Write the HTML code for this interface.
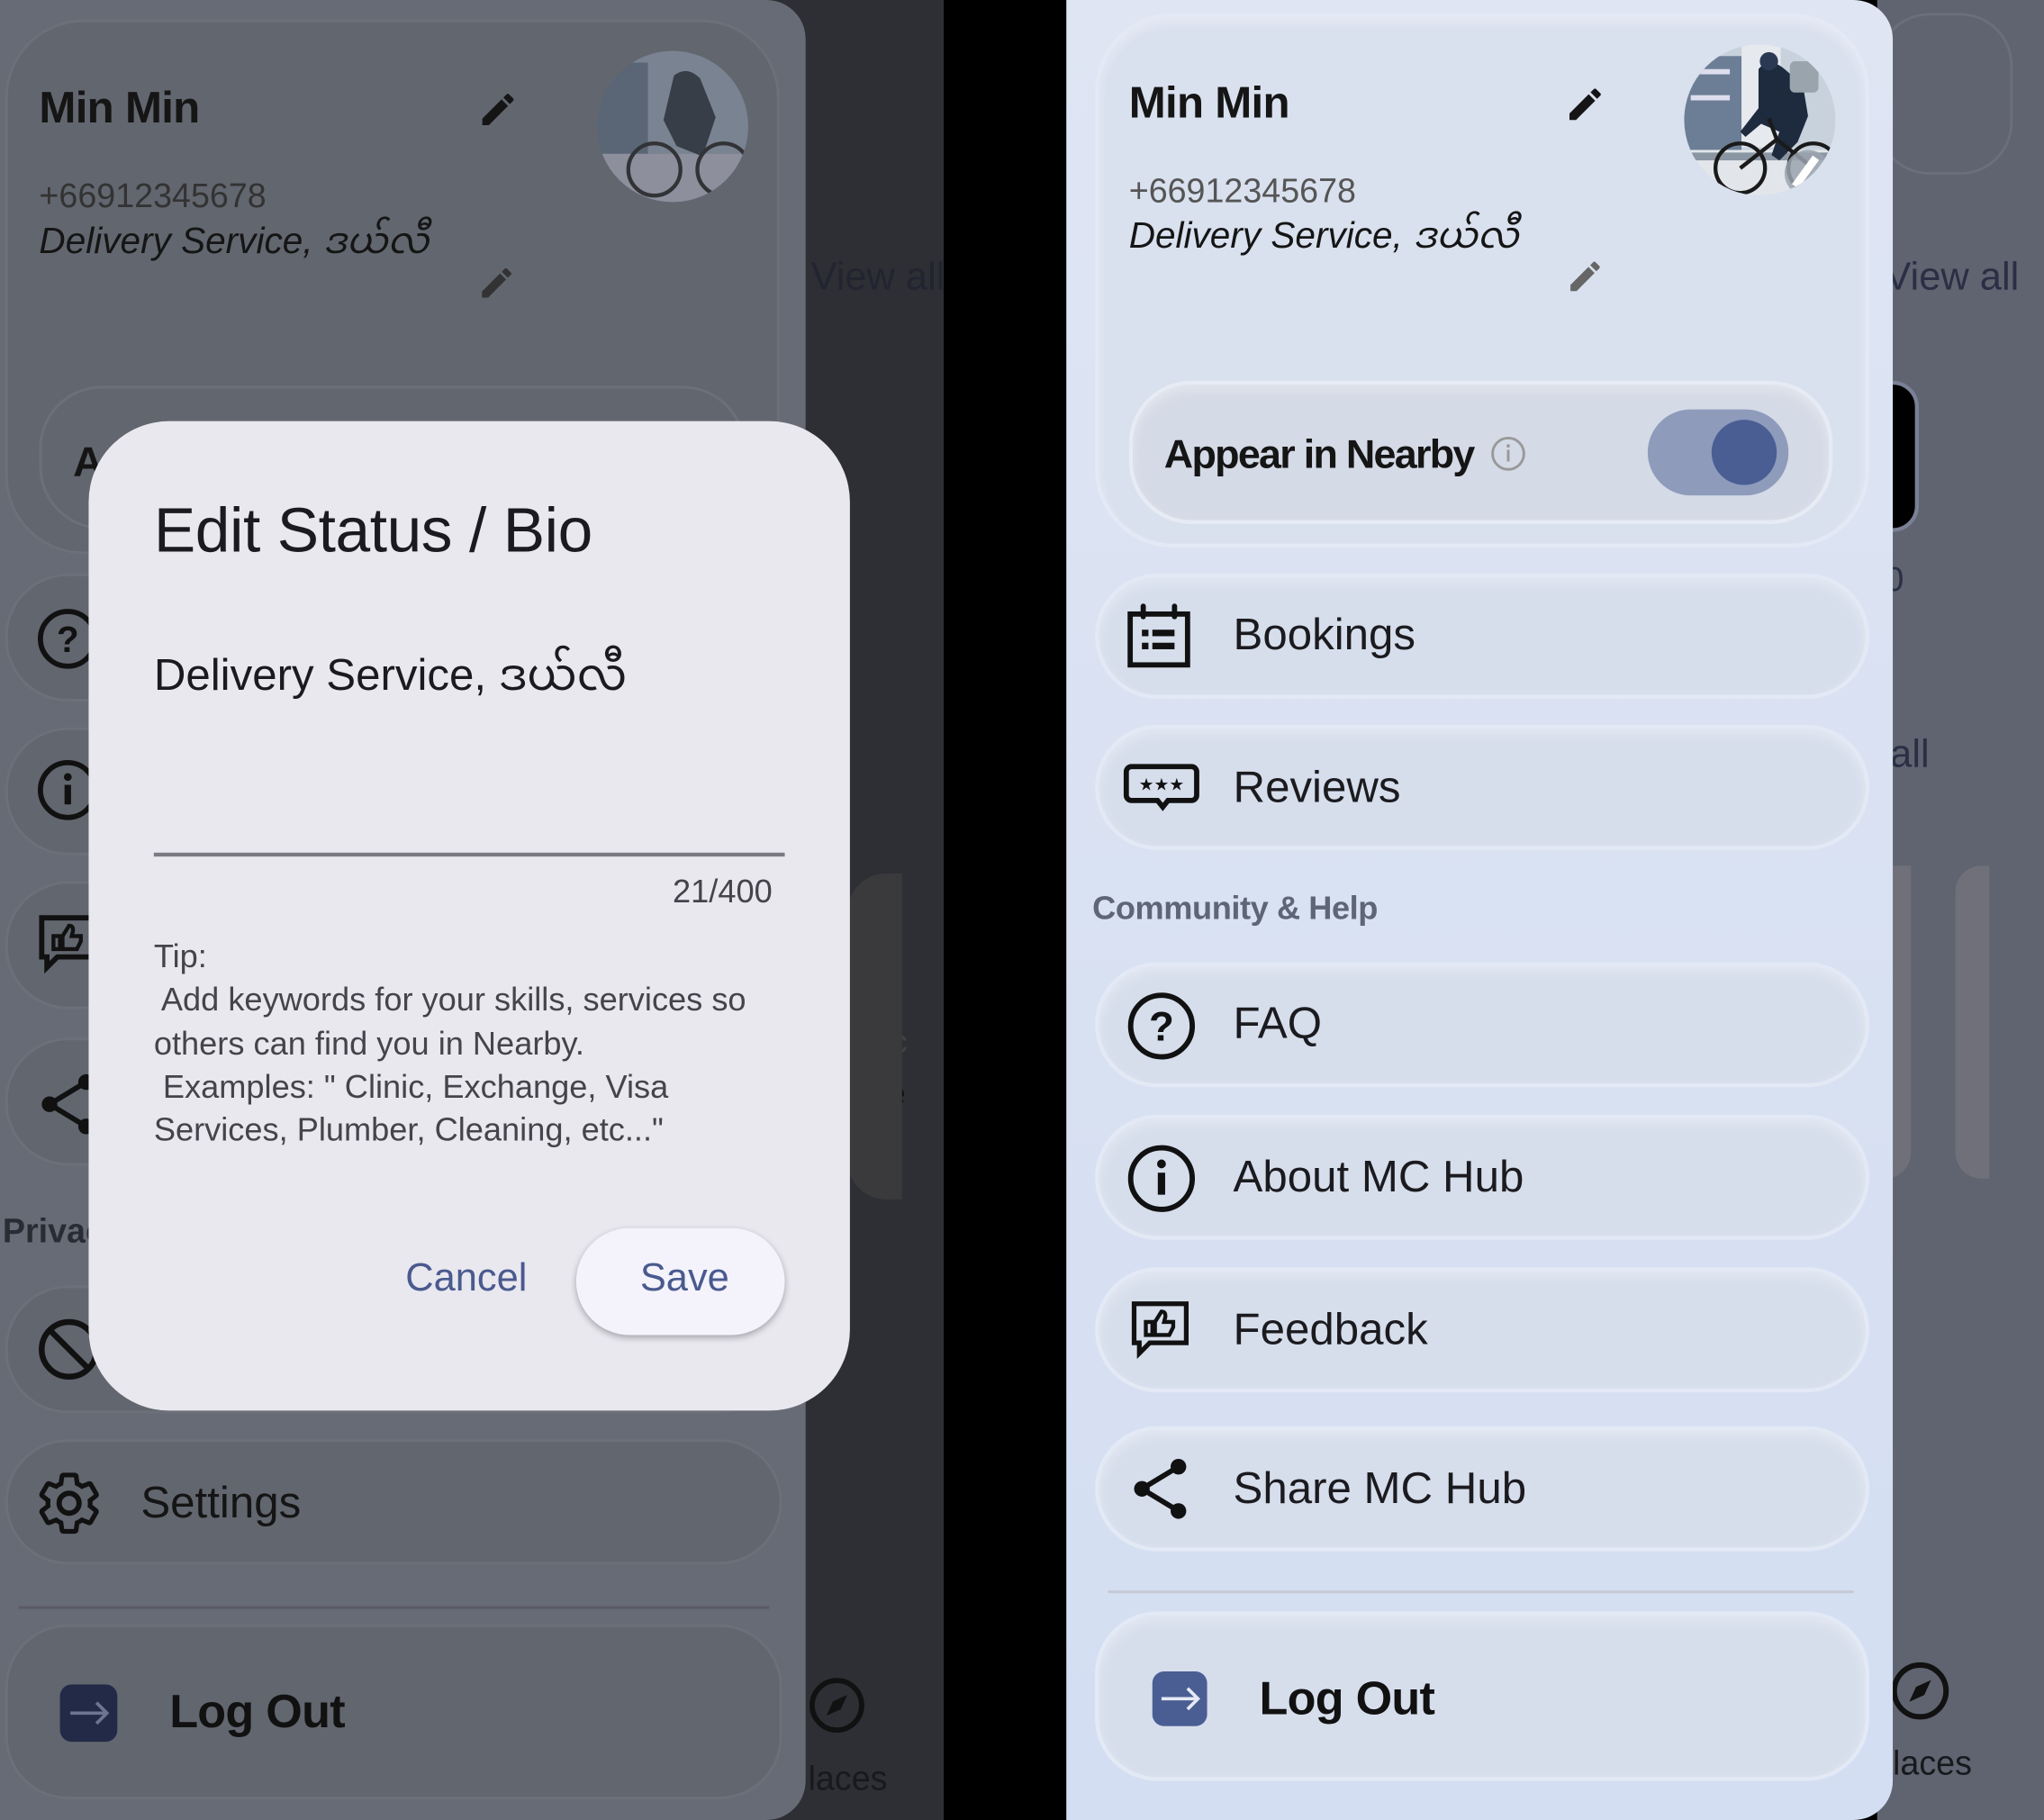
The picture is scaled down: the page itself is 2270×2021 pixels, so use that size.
<!DOCTYPE html>
<html><head><meta charset="utf-8">
<style>
html,body{margin:0;padding:0;width:2270px;height:2021px;overflow:hidden;background:#000;}
#s{position:absolute;left:0;top:0;width:1568px;height:1396px;transform:scale(1.44770,1.44771);transform-origin:0 0;font-family:"Liberation Sans","Noto Sans Myanmar","Padauk",sans-serif;}
.a{position:absolute;}
.card{position:absolute;border-radius:48px;box-sizing:border-box;}
.rc{background:#d6deec;border:3px solid #e3e9f5;box-shadow:inset 0 4px 10px rgba(255,255,255,.35);}
.lc{background:#62666f;border:2px solid #6c7079;}
.t{position:absolute;white-space:nowrap;line-height:1.15;}
.my{line-height:34px;height:34px;}
svg{position:absolute;overflow:visible;}
</style></head><body><div id="s">
<div class="a" style="left:0;top:0;width:724px;height:1396px;background:#2e2f34"></div>
<div class="a" style="left:724px;top:0;width:94px;height:1396px;background:#000"></div>
<div class="a" style="left:1440px;top:0;width:128px;height:1396px;background:#5f6470"></div>

<div class="t" style="left:622px;top:196px;font-size:30px;color:#222430">View all</div>
<div class="t" style="left:668px;top:680px;font-size:30px;color:#111;font-weight:bold">G</div>
<div class="t" style="left:668px;top:786px;font-size:24px;color:#444">Ec</div>
<div class="t" style="left:668px;top:826px;font-size:24px;color:#111">Le</div>
<div class="a" style="left:650px;top:670px;width:42px;height:250px;background:#3a3a3d;border-radius:30px 0 0 30px"></div>
<svg style="left:620px;top:1286px" width="44" height="44" viewBox="0 0 44 44"><circle cx="22" cy="22" r="19" fill="none" stroke="#111" stroke-width="4"/><path d="M30 14 L25 25 L14 30 L19 19Z" fill="#111"/></svg>
<div class="t" style="left:620px;top:1350px;font-size:26px;color:#18191d">laces</div>

<div class="a" style="left:1440px;top:10px;width:100px;height:120px;border:2px solid #6a6f7b;border-radius:40px"></div>
<div class="t" style="left:1446px;top:196px;font-size:30px;color:#2a2f45">View all</div>
<div class="a" style="left:1440px;top:292px;width:26px;height:110px;background:#000;border-radius:0 20px 20px 0;border:3px solid #7a8096"></div>
<div class="t" style="left:1446px;top:430px;font-size:26px;color:#2a2f45">0</div>
<div class="t" style="left:1450px;top:562px;font-size:30px;color:#2a2f45">all</div>
<div class="a" style="left:1440px;top:664px;width:26px;height:240px;background:#6f7079;border-radius:0 0 20px 0"></div>
<div class="a" style="left:1500px;top:664px;width:26px;height:240px;background:#6f7079;border-radius:20px 0 0 20px"></div>
<svg style="left:1450px;top:1274px" width="46" height="46" viewBox="0 0 44 44"><circle cx="22" cy="22" r="19" fill="none" stroke="#111" stroke-width="4"/><path d="M30 14 L25 25 L14 30 L19 19Z" fill="#111"/></svg>
<div class="t" style="left:1452px;top:1338px;font-size:26px;color:#18191d">laces</div>

<!-- LEFT PANEL -->
<div class="a" style="left:0;top:0;width:618px;height:1396px;background:#676b76;border-radius:0 30px 30px 0"></div>
<div class="card lc" style="left:4px;top:15px;width:594px;height:410px;border-radius:60px"></div>
<div class="t" style="left:30px;top:64px;font-size:34px;font-weight:bold;color:#151515;letter-spacing:-.5px">Min Min</div>
<svg style="left:366px;top:68px" width="32" height="32" viewBox="0 0 24 24"><path d="M3 17.25V21h3.75L17.8 9.94l-3.75-3.75L3 17.25zM20.7 7.04a1 1 0 000-1.41l-2.34-2.34a1 1 0 00-1.41 0l-1.83 1.83 3.75 3.75 1.83-1.83z" fill="#151515"/></svg>
<svg style="left:366px;top:202px" width="30" height="30" viewBox="0 0 24 24"><path d="M3 17.25V21h3.75L17.8 9.94l-3.75-3.75L3 17.25zM20.7 7.04a1 1 0 000-1.41l-2.34-2.34a1 1 0 00-1.41 0l-1.83 1.83 3.75 3.75 1.83-1.83z" fill="#333"/></svg>
<div class="t" style="left:30px;top:136px;font-size:26px;color:#333">+66912345678</div>
<div class="t my" style="left:30px;top:168px;font-size:28px;font-style:italic;color:#151515">Delivery Service, ဒယ်လီ</div>
<svg style="left:457px;top:38px" width="118" height="118" viewBox="0 0 118 118"><defs><clipPath id="c1"><circle cx="59" cy="59" r="58"/></clipPath></defs><g clip-path="url(#c1)" opacity=".6"><rect width="118" height="118" fill="#8a96a8"/><rect x="0" y="10" width="40" height="70" fill="#56657a"/><rect x="0" y="80" width="118" height="38" fill="#aab"/><path d="M60 20 q10-8 20 2 l12 30 l-10 30 -20-8 -10-20z" fill="#1c2430"/><circle cx="45" cy="92" r="20" fill="none" stroke="#111" stroke-width="3"/><circle cx="98" cy="92" r="20" fill="none" stroke="#111" stroke-width="3"/></g></svg>
<div class="card lc" style="left:30px;top:296px;width:542px;height:110px"></div>
<div class="t" style="left:56px;top:336px;font-size:32px;font-weight:bold;color:#151515">A</div>
<div class="card lc" style="left:4px;top:440px;width:594px;height:98px"></div>
<div class="card lc" style="left:4px;top:558px;width:594px;height:98px"></div>
<div class="card lc" style="left:4px;top:676px;width:594px;height:98px"></div>
<div class="card lc" style="left:4px;top:796px;width:594px;height:98px"></div>
<svg style="left:28px;top:466px" width="48" height="48" viewBox="0 0 48 48"><circle cx="24" cy="24" r="21" fill="none" stroke="#111" stroke-width="4"/><text x="24" y="34" font-size="28" font-weight="bold" text-anchor="middle" fill="#111" font-family="Liberation Sans">?</text></svg>
<svg style="left:28px;top:582px" width="48" height="48" viewBox="0 0 48 48"><circle cx="24" cy="24" r="21" fill="none" stroke="#111" stroke-width="4"/><rect x="21.5" y="20" width="5" height="15" fill="#111"/><circle cx="24" cy="14" r="3" fill="#111"/></svg>
<svg style="left:28px;top:700px" width="48" height="50" viewBox="0 0 48 50"><path d="M4 4h40v30H16l-8 8v-8H4z" fill="none" stroke="#111" stroke-width="4"/><path d="M13 18h5v10h-5zM20 28V18l5-8c3 0 3 2 3 4l-1 4h7v4l-3 6z" fill="none" stroke="#111" stroke-width="3"/></svg>
<svg style="left:28px;top:822px" width="48" height="50" viewBox="0 0 48 50"><path d="M10 25L38 8M10 25L38 42" stroke="#111" stroke-width="4"/><circle cx="10" cy="25" r="6" fill="#111"/><circle cx="38" cy="8" r="6" fill="#111"/><circle cx="38" cy="42" r="6" fill="#111"/></svg>
<div class="t" style="left:2px;top:930px;font-size:26px;font-weight:bold;color:#2a2c33">Privacy</div>
<div class="card lc" style="left:4px;top:986px;width:594px;height:98px"></div>
<svg style="left:28px;top:1010px" width="50" height="50" viewBox="0 0 50 50"><circle cx="25" cy="25" r="21" fill="none" stroke="#111" stroke-width="4.5"/><path d="M10 10L40 40" stroke="#111" stroke-width="4.5"/></svg>

<!-- DIALOG -->
<div class="a" style="left:68px;top:323px;width:584px;height:759px;background:#e9e8ef;border-radius:62px"></div>
<div class="t" style="left:118px;top:380px;font-size:48px;color:#1b1b1f;letter-spacing:-.3px">Edit Status / Bio</div>
<div class="t my" style="left:118px;top:498px;font-size:34px;color:#1b1b1f;height:40px;line-height:40px">Delivery Service, ဒယ်လီ</div>
<div class="a" style="left:118px;top:654px;width:484px;height:3px;background:#7b7a83"></div>
<div class="t" style="left:516px;top:670px;font-size:25px;color:#44444a">21/400</div>
<div class="t" style="left:118px;top:718px;font-size:25px;line-height:33.3px;color:#44444a;white-space:pre">Tip:
 Add keywords for your skills, services so
others can find you in Nearby.
 Examples: " Clinic, Exchange, Visa
Services, Plumber, Cleaning, etc..."</div>
<div class="t" style="left:311px;top:964px;font-size:30px;color:#4a5a8f">Cancel</div>
<div class="a" style="left:442px;top:942px;width:160px;height:82px;border-radius:41px;background:#f4f3fb;box-shadow:0 2px 5px rgba(0,0,0,.3)"></div>
<div class="t" style="left:491px;top:964px;font-size:30px;color:#4a5a8f">Save</div>

<div class="card lc" style="left:4px;top:1104px;width:596px;height:96px"></div>
<svg style="left:26px;top:1126px" width="54" height="54" viewBox="0 0 24 24"><path d="M19.14 12.94a7.07 7.07 0 000-1.88l2.03-1.58a.5.5 0 00.12-.61l-1.92-3.32a.5.5 0 00-.59-.22l-2.39.96a7 7 0 00-1.62-.94l-.36-2.54A.5.5 0 0013.9 2.4h-3.84a.5.5 0 00-.48.41l-.36 2.540a7.3 7.3 0 00-1.62.94l-2.39-.96a.5.5 0 00-.59.22L2.7 8.87a.5.5 0 00.12.61l2.03 1.58a7.2 7.2 0 000 1.88l-2.03 1.58a.5.5 0 00-.12.61l1.92 3.32c.12.22.37.29.59.22l2.39-.96c.5.38 1.040.7 1.62.94l.36 2.54c.05.24.26.41.48.41h3.84c.24 0 .44-.17.48-.41l.36-2.54a7 7 0 001.62-.94l2.39.96c.22.08.47 0 .59-.22l1.92-3.32a.5.5 0 00-.12-.61z" fill="none" stroke="#111" stroke-width="1.6"/><circle cx="12" cy="12" r="3.4" fill="none" stroke="#111" stroke-width="1.8"/></svg>
<div class="t" style="left:108px;top:1134px;font-size:34px;color:#151515">Settings</div>
<div class="a" style="left:14px;top:1232px;width:576px;height:2px;background:#5a5a66"></div>
<div class="card lc" style="left:4px;top:1246px;width:596px;height:134px"></div>
<div class="a" style="left:46px;top:1292px;width:44px;height:44px;border-radius:9px;background:#232a47"></div>
<svg style="left:46px;top:1292px" width="44" height="44" viewBox="0 0 44 44"><path d="M8 22h28M28 14l8 8-8 8" fill="none" stroke="#6d7590" stroke-width="2.5"/></svg>
<div class="t" style="left:130px;top:1292px;font-size:36px;font-weight:bold;color:#111;letter-spacing:-.5px">Log Out</div>

<!-- RIGHT PANEL -->
<div class="a" style="left:818px;top:0;width:634px;height:1396px;background:linear-gradient(#dfe5f3,#d3def2);border-radius:0 30px 30px 0"></div>
<div class="card rc" style="left:840px;top:10px;width:594px;height:410px;border-radius:60px;background:#d9e0ee"></div>
<div class="t" style="left:866px;top:60px;font-size:34px;font-weight:bold;color:#151515;letter-spacing:-.5px">Min Min</div>
<svg style="left:1200px;top:64px" width="32" height="32" viewBox="0 0 24 24"><path d="M3 17.25V21h3.75L17.8 9.94l-3.75-3.75L3 17.25zM20.7 7.04a1 1 0 000-1.41l-2.34-2.34a1 1 0 00-1.41 0l-1.83 1.83 3.75 3.75 1.83-1.83z" fill="#151515"/></svg>
<svg style="left:1201px;top:197px" width="30" height="30" viewBox="0 0 24 24"><path d="M3 17.25V21h3.75L17.8 9.94l-3.75-3.75L3 17.25zM20.7 7.04a1 1 0 000-1.41l-2.34-2.34a1 1 0 00-1.41 0l-1.83 1.83 3.75 3.75 1.83-1.83z" fill="#666"/></svg>
<div class="t" style="left:866px;top:132px;font-size:26px;color:#555">+66912345678</div>
<div class="t my" style="left:866px;top:164px;font-size:28px;font-style:italic;color:#151515">Delivery Service, ဒယ်လီ</div>
<svg style="left:1291px;top:33px" width="118" height="118" viewBox="0 0 118 118"><defs><clipPath id="c2"><circle cx="59" cy="59" r="58"/></clipPath></defs><g clip-path="url(#c2)"><rect width="118" height="118" fill="#c8d2dc"/><rect x="0" y="10" width="45" height="72" fill="#6c7e95"/><rect x="6" y="20" width="30" height="4" fill="#dde"/><rect x="6" y="40" width="30" height="4" fill="#dde"/><rect x="45" y="0" width="30" height="80" fill="#e6e9ee"/><rect x="0" y="82" width="118" height="36" fill="#e2e6ea"/><rect x="0" y="84" width="118" height="6" fill="#8b96a3"/><path d="M58 20q8-10 20 0l14 12 4 24-8 20-14 14-6-4 6-18-14-6-12 10-4-4 14-18z" fill="#1e2a3e"/><circle cx="66" cy="14" r="7" fill="#2b3a52"/><rect x="82" y="14" width="22" height="24" rx="4" fill="#9aa4ad"/><circle cx="44" cy="96" r="19" fill="none" stroke="#1a1a1a" stroke-width="3"/><circle cx="100" cy="96" r="19" fill="none" stroke="#1a1a1a" stroke-width="3"/><path d="M44 96l28-22 28 22M72 74l-6-16" stroke="#1a1a1a" stroke-width="3" fill="none"/><circle cx="96" cy="100" r="18" fill="#9aa3ae" opacity=".85"/><path d="M86 110l16-22" stroke="#fff" stroke-width="6"/></g></svg>
<div class="card rc" style="left:866px;top:292px;width:540px;height:110px;background:#d4dae6;border-color:#e6ebf4"></div>
<div class="t" style="left:893px;top:331px;font-size:31px;font-weight:bold;color:#151515;letter-spacing:-1.2px">Appear in Nearby</div>
<svg style="left:1143px;top:334px" width="28" height="28" viewBox="0 0 28 28"><circle cx="14" cy="14" r="12" fill="none" stroke="#999" stroke-width="2"/><rect x="13" y="11" width="2" height="9" fill="#999"/><circle cx="14" cy="8" r="1.3" fill="#999"/></svg>
<div class="a" style="left:1264px;top:314px;width:108px;height:66px;border-radius:33px;background:#8e9bbb"></div>
<div class="a" style="left:1313px;top:322px;width:50px;height:50px;border-radius:50%;background:#4a5e94"></div>

<div class="card rc" style="left:840px;top:440px;width:594px;height:96px"></div>
<svg style="left:864px;top:463px" width="52" height="50" viewBox="0 0 52 50"><rect x="3" y="8" width="44" height="39" fill="none" stroke="#111" stroke-width="4"/><path d="M13 2v8M37 2v8" stroke="#111" stroke-width="4" stroke-linecap="round"/><rect x="12" y="20" width="5" height="5" fill="#111"/><rect x="12" y="30" width="5" height="5" fill="#111"/><rect x="20" y="20" width="17" height="5" fill="#111"/><rect x="20" y="30" width="17" height="5" fill="#111"/></svg>
<div class="t" style="left:946px;top:468px;font-size:34px;color:#1b1b1f">Bookings</div>
<div class="card rc" style="left:840px;top:556px;width:594px;height:96px"></div>
<svg style="left:862px;top:586px" width="58" height="40" viewBox="0 0 58 40"><path d="M6 2h46a4 4 0 014 4v18a4 4 0 01-4 4H34l-4 5-4-5H6a4 4 0 01-4-4V6a4 4 0 014-4z" fill="none" stroke="#111" stroke-width="4"/><text x="29" y="20" font-size="13" text-anchor="middle" fill="#111" font-family="DejaVu Sans">★★★</text></svg>
<div class="t" style="left:946px;top:585px;font-size:34px;color:#1b1b1f">Reviews</div>
<div class="t" style="left:838px;top:683px;font-size:25px;font-weight:bold;color:#5d6577;letter-spacing:-.3px">Community &amp; Help</div>

<div class="card rc" style="left:840px;top:738px;width:594px;height:96px"></div>
<svg style="left:864px;top:760px" width="54" height="54" viewBox="0 0 48 48"><circle cx="24" cy="24" r="21" fill="none" stroke="#111" stroke-width="3.6"/><text x="24" y="34" font-size="28" font-weight="bold" text-anchor="middle" fill="#111" font-family="Liberation Sans">?</text></svg>
<div class="t" style="left:946px;top:766px;font-size:34px;color:#1b1b1f">FAQ</div>
<div class="card rc" style="left:840px;top:855px;width:594px;height:96px"></div>
<svg style="left:864px;top:877px" width="54" height="54" viewBox="0 0 48 48"><circle cx="24" cy="24" r="21" fill="none" stroke="#111" stroke-width="3.6"/><rect x="21.5" y="20" width="5" height="15" fill="#111"/><circle cx="24" cy="14" r="3" fill="#111"/></svg>
<div class="t" style="left:946px;top:884px;font-size:34px;color:#1b1b1f">About MC Hub</div>
<div class="card rc" style="left:840px;top:972px;width:594px;height:96px"></div>
<svg style="left:864px;top:996px" width="52" height="50" viewBox="0 0 48 50"><path d="M4 4h40v30H16l-8 8v-8H4z" fill="none" stroke="#111" stroke-width="3.6"/><path d="M13 18h5v10h-5zM20 28V18l5-8c3 0 3 2 3 4l-1 4h7v4l-3 6z" fill="none" stroke="#111" stroke-width="3"/></svg>
<div class="t" style="left:946px;top:1001px;font-size:34px;color:#1b1b1f">Feedback</div>
<div class="card rc" style="left:840px;top:1094px;width:594px;height:96px"></div>
<svg style="left:866px;top:1116px" width="48" height="52" viewBox="0 0 48 50"><path d="M10 25L38 8M10 25L38 42" stroke="#111" stroke-width="4"/><circle cx="10" cy="25" r="6" fill="#111"/><circle cx="38" cy="8" r="6" fill="#111"/><circle cx="38" cy="42" r="6" fill="#111"/></svg>
<div class="t" style="left:946px;top:1123px;font-size:34px;color:#1b1b1f">Share MC Hub</div>
<div class="a" style="left:850px;top:1220px;width:572px;height:2px;background:#c5cad6"></div>
<div class="card rc" style="left:840px;top:1236px;width:594px;height:130px"></div>
<div class="a" style="left:884px;top:1282px;width:42px;height:42px;border-radius:9px;background:#4a5e94"></div>
<svg style="left:884px;top:1282px" width="42" height="42" viewBox="0 0 42 42"><path d="M7 21h28M27 13l8 8-8 8" fill="none" stroke="#e6eaf5" stroke-width="2.5"/></svg>
<div class="t" style="left:966px;top:1282px;font-size:36px;font-weight:bold;color:#111;letter-spacing:-.5px">Log Out</div>
</div></body></html>
